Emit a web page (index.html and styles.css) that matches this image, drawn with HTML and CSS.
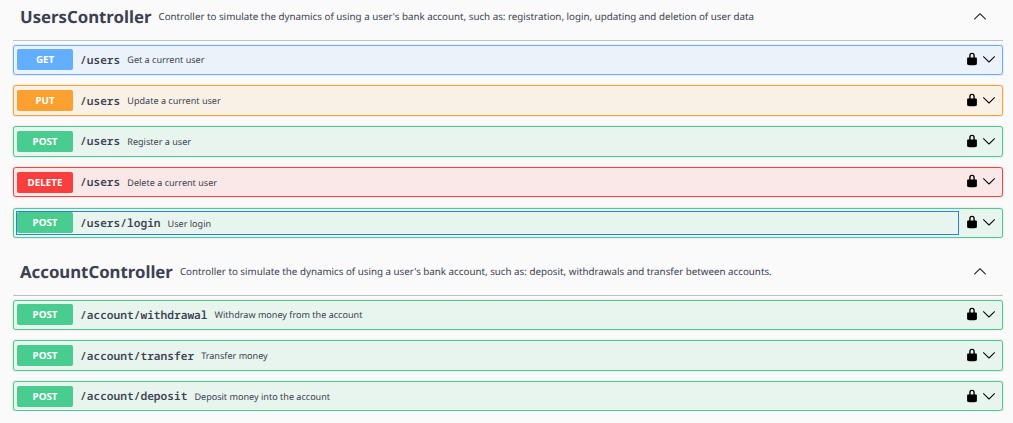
FILE: index.html
```
<!DOCTYPE html>
<html lang="en">
<head>
<meta charset="utf-8">
<title>API documentation</title>
<link rel="stylesheet" href="styles.css">
</head>
<body>
<svg class="sprite" aria-hidden="true">
  <symbol id="lock" viewBox="0 0 20 20"><path d="M15.8 8H14V5.6C14 2.703 12.665 1 10 1 7.334 1 6 2.703 6 5.6V8H4c-.553 0-1 .646-1 1.199V17c0 .549.428 1.139.951 1.307l1.197.387C5.672 18.861 6.55 19 7.1 19h5.8c.549 0 1.428-.139 1.951-.307l1.196-.387c.524-.167.953-.757.953-1.306V9.199C17 8.646 16.352 8 15.8 8zM12 8H8V5.199C8 3.754 8.797 3 10 3c1.203 0 2 .754 2 2.199V8z"/></symbol>
  <symbol id="down" viewBox="0 0 20 20"><path d="M17.418 6.109c.272-.268.709-.268.979 0s.271.701 0 .969l-7.908 7.83c-.27.268-.707.268-.979 0l-7.908-7.83c-.27-.268-.27-.701 0-.969.271-.268.709-.268.979 0L10 13.25l7.418-7.141z"/></symbol>
  <symbol id="up" viewBox="0 0 20 20"><path d="M17.418 14.908c.272.268.709.268.979 0s.271-.701 0-.969l-7.908-7.83c-.27-.268-.707-.268-.979 0l-7.908 7.83c-.27.268-.27.701 0 .969.271.268.709.268.979 0L10 7.767l7.418 7.141z"/></symbol>
</svg>
<main class="page">
  <section class="tag">
    <header class="tag-head"><h3 class="tag-name">UsersController</h3><p class="tag-desc">Controller to simulate the dynamics of using a user's bank account, such as: registration, login, updating and deletion of user data</p><svg class="arrow"><use href="#up"/></svg></header>
    <div class="ops">
      <div class="op get"><div class="summary"><span class="method">GET</span><span class="path">/users</span><span class="desc">Get a current user</span></div><svg class="lock"><use href="#lock"/></svg><svg class="arrow"><use href="#down"/></svg></div>
      <div class="op put"><div class="summary"><span class="method">PUT</span><span class="path">/users</span><span class="desc">Update a current user</span></div><svg class="lock"><use href="#lock"/></svg><svg class="arrow"><use href="#down"/></svg></div>
      <div class="op post"><div class="summary"><span class="method">POST</span><span class="path">/users</span><span class="desc">Register a user</span></div><svg class="lock"><use href="#lock"/></svg><svg class="arrow"><use href="#down"/></svg></div>
      <div class="op delete"><div class="summary"><span class="method">DELETE</span><span class="path">/users</span><span class="desc">Delete a current user</span></div><svg class="lock"><use href="#lock"/></svg><svg class="arrow"><use href="#down"/></svg></div>
      <div class="op post"><div class="summary focused"><span class="method">POST</span><span class="path">/users/login</span><span class="desc">User login</span></div><svg class="lock"><use href="#lock"/></svg><svg class="arrow"><use href="#down"/></svg></div>
    </div>
  </section>
  <section class="tag">
    <header class="tag-head"><h3 class="tag-name">AccountController</h3><p class="tag-desc">Controller to simulate the dynamics of using a user's bank account, such as: deposit, withdrawals and transfer between accounts.</p><svg class="arrow"><use href="#up"/></svg></header>
    <div class="ops">
      <div class="op post"><div class="summary"><span class="method">POST</span><span class="path">/account/withdrawal</span><span class="desc">Withdraw money from the account</span></div><svg class="lock"><use href="#lock"/></svg><svg class="arrow"><use href="#down"/></svg></div>
      <div class="op post"><div class="summary"><span class="method">POST</span><span class="path">/account/transfer</span><span class="desc">Transfer money</span></div><svg class="lock"><use href="#lock"/></svg><svg class="arrow"><use href="#down"/></svg></div>
      <div class="op post"><div class="summary"><span class="method">POST</span><span class="path">/account/deposit</span><span class="desc">Deposit money into the account</span></div><svg class="lock"><use href="#lock"/></svg><svg class="arrow"><use href="#down"/></svg></div>
    </div>
  </section>
</main>
</body>
</html>
```
FILE: styles.css
```
* { box-sizing: border-box; }
body {
  margin: 0;
  background: #fafafa;
  color: #3b4151;
  font-family: "Noto Sans", sans-serif;
  text-rendering: geometricPrecision;
}
.sprite { display: none; }
.page { padding: 0 10px 0 13px; }
.tag + .tag { margin-top: 16.8px; }
.tag-head {
  display: flex;
  align-items: center;
  height: 41px;
  padding: 0 16px 7px 7px;
  border-bottom: 1px solid #bfc0c2;
}
.tag-name { margin: 0; font-size: 16.75px; line-height: 23px; font-weight: 700; }
.tag-desc { flex: 1; margin: 0; padding: .6px 0 0 7px; font-size: 9.77px; line-height: 14px; white-space: nowrap; }
.arrow { width: 14px; height: 14px; flex: none; margin-bottom: 1.4px; }
.tag-head .arrow { fill: #222; margin-bottom: 1px; }
.ops { display: flex; flex-direction: column; gap: 10.4px; padding-top: 3.6px; }
.op {
  display: flex;
  align-items: center;
  height: 30.4px;
  padding: 0 6px 0 3px;
  border: 1px solid;
  border-radius: 2.8px;
  box-shadow: 0 0 2px rgba(0, 0, 0, .19);
}
.summary { display: flex; align-items: center; flex: 1; height: 21.1px; }
.focused { position: relative; }
.focused::after {
  content: "";
  position: absolute;
  inset: -1.5px 0 -1.5px -1px;
  border: 1px solid #2f7fe0;
}
.method {
  width: 56px;
  height: 21.1px;
  border-radius: 2px;
  color: #fff;
  font-size: 9.8px;
  font-weight: 700;
  line-height: 22.2px;
  text-align: center;
}
.path { padding: 1.2px 7px 0; font: 600 11.2px/15px "Noto Sans Mono", "DejaVu Sans Mono", monospace; }
.desc { font-size: 9.07px; line-height: 13px; padding-top: .2px; }
.lock { width: 14px; height: 14px; margin: 0 3px 1.4px 6px; flex: none; }
.get { border-color: #61affe; background: #ebf2fa; }
.get .method { background: #61affe; }
.put { border-color: #fca130; background: #faf1e6; }
.put .method { background: #fca130; }
.post { border-color: #49cc90; background: #e8f4ee; }
.post .method { background: #49cc90; }
.delete { border-color: #f93e3e; background: #fae7e7; }
.delete .method { background: #f93e3e; }
```
